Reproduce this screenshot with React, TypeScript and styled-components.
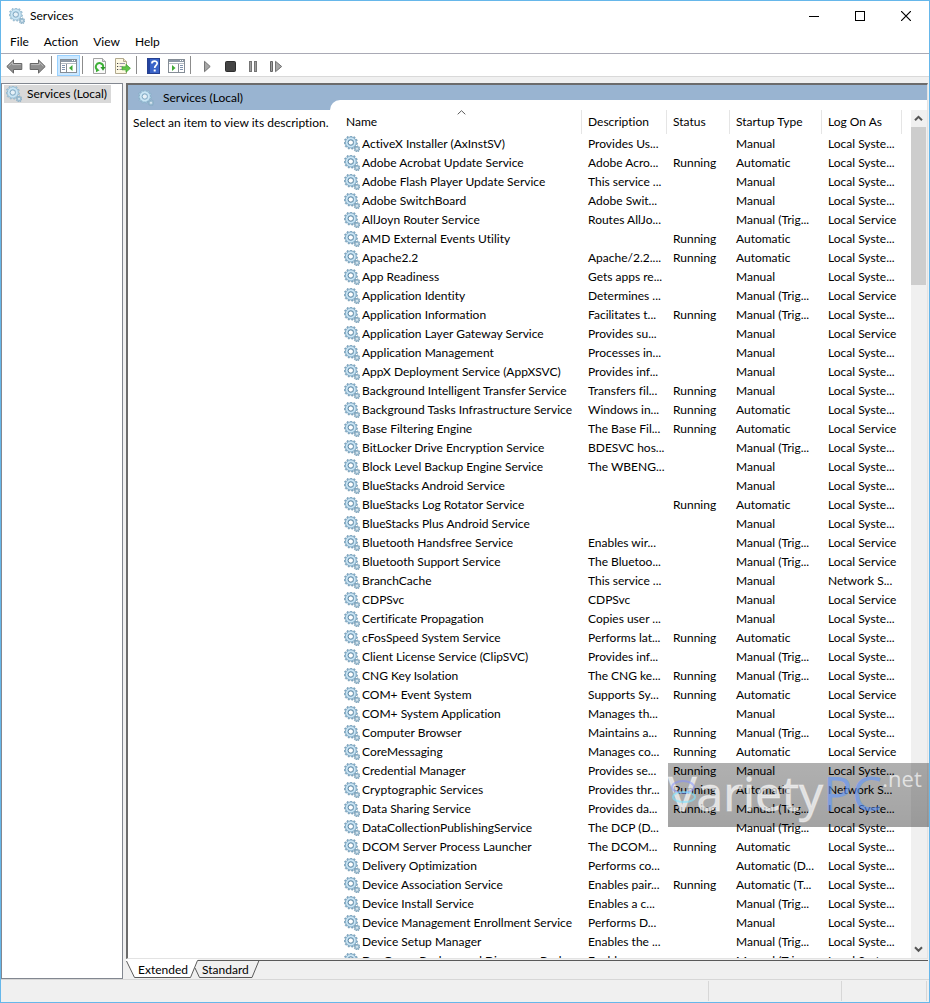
import React from 'react';
import styled, { createGlobalStyle } from 'styled-components';

const GlobalStyle = createGlobalStyle`
  *, *::before, *::after { box-sizing: border-box; }
  body { margin: 0; }
  body, button, table {
    font-family: Lato, 'Open Sans', sans-serif;
    font-size: 12px;
    line-height: 18px;
    color: #000;
    font-variant-ligatures: none;
  }
  button { margin: 0; padding: 0; border: 0; background: none; cursor: default; }
  svg { display: block; flex: none; }
`;

const AppWindow = styled.div`
  position: relative;
  display: flex;
  flex-direction: column;
  height: 100vh;
  border: 1px solid #66b7ea;
  background: #f0f0f0;
  overflow: hidden;
`;

const TitleBar = styled.header`
  display: flex;
  align-items: center;
  flex: none;
  height: 30px;
  padding-left: 8px;
  gap: 5px;
  background: #fff;
`;

const Title = styled.h1`
  flex: 1;
  margin: 0;
  font-size: 12px;
  font-weight: 400;
`;

const CaptionButton = styled.button`
  display: grid;
  place-items: center;
  width: 46px;
  height: 30px;
`;

const CaptionButtons = styled.div`
  display: flex;
`;

const MenuBar = styled.nav`
  display: flex;
  flex: none;
  height: 23px;
  padding-left: 2px;
  border-bottom: 1px solid #a9aab5;
  background: #fff;
`;

const MenuItem = styled.button`
  padding: 0 8px 0 7px;
`;

const ToolBar = styled.div`
  display: flex;
  flex: none;
  height: 23px;
  padding: 1px 2px 0;
  border-bottom: 1px solid #d9d9d9;
  background: #fff;
`;

const ToolButton = styled.button<{ $active?: boolean }>`
  display: grid;
  place-items: center;
  width: 23px;
  height: 21px;
  padding-top: 1px;
  border: 1px solid ${(p) => (p.$active ? '#99d1ff' : 'transparent')};
  background: ${(p) => (p.$active ? '#cce8ff' : 'transparent')};
`;

const ToolSeparator = styled.span`
  width: 1px;
  margin: 1px 5px 2px 2px;
  background: #8c8c8c;
`;

const Workspace = styled.div`
  display: flex;
  flex: 1;
  min-height: 0;
  padding-top: 6px;
`;

const Tree = styled.aside`
  flex: none;
  width: 122px;
  padding: 1px 2px;
  border: 1px solid #828790;
  background: #fff;
`;

const TreeItem = styled.button`
  display: flex;
  align-items: center;
  gap: 5px;
  height: 18px;
  padding: 0 4px 0 2px;
  background: #d9d9d9;
`;

const Content = styled.main`
  display: flex;
  flex-direction: column;
  flex: 1;
  min-width: 0;
  margin-left: 3px;
`;

const Sheet = styled.div`
  display: flex;
  flex: 1;
  min-height: 0;
  border-left: 2px solid #6c6c6c;
  border-top: 2px solid #6c6c6c;
  border-right: 1px solid #e3e3e3;
  border-bottom: 1px solid #e3e3e3;
  background: #99b4d1;
  margin-right: 1px;
`;

const DetailPane = styled.section`
  display: flex;
  flex-direction: column;
  flex: none;
  width: 202px;
`;

const DetailHeading = styled.h2`
  display: flex;
  align-items: center;
  flex: none;
  gap: 9px;
  height: 25px;
  margin: 0;
  padding-left: 10px;
  font-size: 12px;
  font-weight: 400;
`;

const DetailBody = styled.p`
  flex: 1;
  margin: 0;
  padding: 4px 0 0 5px;
  background: #fff;
  white-space: nowrap;
`;

const ListPane = styled.section`
  display: flex;
  flex: 1;
  min-width: 0;
  padding-top: 15px;
`;

const ListBody = styled.div`
  display: flex;
  flex: 1;
  min-width: 0;
  padding: 10px 0 0 10px;
  border-top-left-radius: 10px;
  background: #fff;
`;

const TableClip = styled.div`
  flex: 1;
  min-width: 0;
  overflow: hidden;
`;

const ServiceTable = styled.table`
  width: 562px;
  table-layout: fixed;
  border-collapse: separate;
  border-spacing: 0;
`;

const HeadCell = styled.th<{ $width: number }>`
  position: relative;
  width: ${(p) => p.$width}px;
  height: 24px;
  padding: 0 0 0 6px;
  border-right: 1px solid #e5e5e5;
  font-weight: 400;
  text-align: left;
`;

const SortMark = styled.svg`
  position: absolute;
  top: 0;
  left: 50%;
  margin-left: -4px;
`;

const Cell = styled.td`
  height: 19px;
  padding: 0 0 0 6px;
  line-height: 19px;
  white-space: nowrap;
`;

const NameCell = styled(Cell)`
  padding-left: 4px;
`;

const NameContent = styled.span`
  display: flex;
  align-items: center;
  gap: 2px;
`;

const ScrollBar = styled.div`
  display: flex;
  flex-direction: column;
  flex: none;
  width: 16px;
  padding-right: 1px;
  background: #f0f0f0;
`;

const ScrollButton = styled.button`
  display: grid;
  place-items: center;
  flex: none;
  height: 17px;
`;

const ScrollTrack = styled.div`
  flex: 1;
`;

const ScrollThumb = styled.div`
  height: 158px;
  background: #cdcdcd;
`;

const TabStrip = styled.div`
  position: relative;
  display: flex;
  flex: none;
  height: 20px;
  padding: 1px 0 0 8px;
`;

const TabShapes = styled.svg`
  position: absolute;
  inset: 0 auto auto 0;
`;

const TabLine = styled.span`
  flex: 1;
  margin-right: 1px;
  border-top: 1px solid #5a5a5a;
`;

const Tab = styled.button`
  position: relative;
  width: 64px;
  height: 19px;
  padding-left: 4px;
  text-align: left;
  line-height: 19px;
`;

const StatusBar = styled.footer`
  display: flex;
  justify-content: flex-end;
  flex: none;
  height: 23px;
  padding: 1px 2px 1px 0;
  border-top: 1px solid #d7d7d7;
`;

const StatusCell = styled.span<{ $width: number }>`
  width: ${(p) => p.$width}px;
  border-left: 1px solid #d7d7d7;

  &:last-child { border-right: 1px solid #d7d7d7; }
`;

const Watermark = styled.div`
  position: absolute;
  right: 0;
  bottom: 175px;
  display: flex;
  align-items: flex-start;
  width: 261px;
  height: 64px;
  background: linear-gradient(rgba(0, 0, 0, 0.31), rgba(0, 0, 0, 0.36));
  font-family: 'Open Sans', sans-serif;
  font-size: 48px;
  line-height: 60px;
  color: rgba(255, 255, 255, 0.66);
  pointer-events: none;
  overflow: hidden;
`;

const WatermarkWord = styled.span`
  -webkit-text-stroke: 1px rgba(255, 255, 255, 0.4);
`;

const WatermarkAccent = styled.span`
  color: rgba(95, 150, 255, 0.6);
`;

const WatermarkSuffix = styled.span`
  font-size: 22px;
  line-height: 30px;
`;

const Swirl = styled.svg`
  position: absolute;
  top: 16px;
  left: 1px;
`;

function teeth(cx: number, cy: number, outer: number, inner: number, count: number) {
  const points: string[] = [];
  for (let i = 0; i < count; i++) {
    const base = (i / count) * Math.PI * 2;
    const step = (Math.PI * 2) / count;
    [[0.0, inner], [0.15, outer], [0.5, outer], [0.65, inner]].forEach(([t, r]) => {
      const a = base + step * t;
      points.push(`${(cx + Math.cos(a) * r).toFixed(2)},${(cy + Math.sin(a) * r).toFixed(2)}`);
    });
  }
  return points.join(' ');
}

const BIG_GEAR = teeth(6.8, 6.5, 6.8, 5.4, 11);
const SMALL_GEAR = teeth(13, 12.8, 3.1, 2.2, 8);

function GearIcon({ soft = false }: { soft?: boolean }) {
  const edge = soft ? '#7fa6bf' : '#5f88a3';
  return (
    <svg width="16" height="16" viewBox="0 0 16 16" aria-hidden="true">
      <polygon points={BIG_GEAR} fill={soft ? '#a9cde2' : '#8db4cf'} stroke={edge} strokeWidth="0.5" />
      <circle cx="6.8" cy="6.5" r="4.1" fill="none" stroke="#cbe6f5" strokeWidth="1.6" />
      <circle cx="6.8" cy="6.5" r="2.6" fill={soft ? '#e6f1f8' : '#fff'} stroke={edge} strokeWidth="0.9" />
      <polygon points={SMALL_GEAR} fill="#9fbfd3" stroke={edge} strokeWidth="0.5" />
      <circle cx="13" cy="12.8" r="0.9" fill="#eef6fa" />
    </svg>
  );
}

function ArrowIcon({ forward = false }: { forward?: boolean }) {
  const flip = forward ? 'translate(17 0) scale(-1 1)' : undefined;
  return (
    <svg width="17" height="15" viewBox="0 0 17 15" aria-hidden="true">
      <g transform={flip}>
        <path d="M.8 7.500 7.500.9V4.500H15.800V10.500H7.500V14.100Z" fill="#8e8e8e" stroke="#666" />
        <path d="M2.600 7.200 6.600 3.300V5.600H14.800" fill="none" stroke="#bdbdbd" />
      </g>
    </svg>
  );
}

function ConsoleIcon({ mirrored = false }: { mirrored?: boolean }) {
  return (
    <svg width="17" height="14" viewBox="0 0 17 14" shapeRendering="crispEdges" aria-hidden="true">
      <rect x="0.5" y="0.5" width="16" height="13" fill="#fff" stroke="#858d96" />
      <rect x="1" y="1" width="15" height="2" fill="#8b98a6" />
      <path d="M1 4.500h15" stroke="#b4bcc4" />
      <path d="M12 1h1v1h-1zM14 1h1v1h-1z" fill="#fff" />
      {mirrored ? (
        <>
          <path d="M10.500 5v8" stroke="#858d96" />
          <path d="M12 6.500h3M12 8.500h3M12 10.500h3" stroke="#7f93ae" />
          <path d="M4 6v6L7.500 9z" fill="#3faa36" shapeRendering="auto" />
        </>
      ) : (
        <>
          <path d="M6.500 5v8" stroke="#858d96" />
          <path d="M2 6.500h3M2 8.500h3M2 10.500h3" stroke="#7f93ae" />
          <path d="M12.500 6v6L9 9z" fill="#3faa36" shapeRendering="auto" />
        </>
      )}
    </svg>
  );
}

function RefreshIcon() {
  return (
    <svg width="15" height="17" viewBox="0 0 15 17" aria-hidden="true">
      <path d="M1.500.500h9l3 3v12h-12z" fill="#fafafa" stroke="#a3a3a3" />
      <path d="M10.500.500v3h3" fill="#ddd" stroke="#a3a3a3" />
      <path d="M5.600 12A3.700 3.700 0 1 1 11.200 9.200" fill="none" stroke="#3db036" strokeWidth="1.9" />
      <path d="M8.400 9h5.200l-2.600 3.800z" fill="#2f9c2b" />
      <path d="M4 9.700l3.600 2.600L4 14.200z" fill="#3db036" />
    </svg>
  );
}

function ExportIcon() {
  return (
    <svg width="17" height="17" viewBox="0 0 17 17" aria-hidden="true">
      <path d="M1.500.500h8l3 3v12h-11z" fill="#fdf8e2" stroke="#b1a98e" />
      <path d="M9.500.500v3h3" fill="#eee4c0" stroke="#b1a98e" />
      <path d="M3 5.500h1.200M3 8.500h1.200M3 11.500h1.200" stroke="#444" />
      <path d="M5.500 5.500H11M5.500 8.500h3M5.500 11.500h3" stroke="#9a94a8" />
      <path d="M8 8.800h4V6.300l4.400 4-4.400 4v-2.500H8z" fill="#62c649" stroke="#3a9f2d" strokeWidth="0.7" />
    </svg>
  );
}

function HelpIcon() {
  return (
    <svg width="13" height="17" viewBox="0 0 13 17" aria-hidden="true">
      <rect x="0.5" y="0.5" width="12" height="15" fill="#3a63c8" stroke="#26408f" />
      <rect x="1" y="1" width="2" height="14" fill="#2343a0" />
      <path d="M4.900 5.400C4.900 2.300 10.200 2.300 10.200 5.300 10.200 7.400 7.700 7.500 7.700 10" fill="none" stroke="#fff" strokeWidth="1.7" />
      <rect x="6.700" y="11.500" width="2" height="2" fill="#fff" />
    </svg>
  );
}

function PlayIcon() {
  return (
    <svg width="7" height="13" viewBox="0 0 7 13" aria-hidden="true">
      <path d="M.5 1.300v10.400L6.200 6.500z" fill="#a7a7a7" stroke="#757575" />
    </svg>
  );
}

function StopIcon() {
  return (
    <svg width="11" height="11" viewBox="0 0 11 11" aria-hidden="true">
      <rect x="0.5" y="0.5" width="10" height="10" rx="1" fill="#444" stroke="#2d2d2d" />
    </svg>
  );
}

function PauseIcon() {
  return (
    <svg width="9" height="11" viewBox="0 0 9 11" shapeRendering="crispEdges" aria-hidden="true">
      <path d="M0.500 0.500h2v10h-2zM5.500 0.500h2v10h-2z" fill="#a0a0a0" stroke="#757575" />
    </svg>
  );
}

function StepIcon() {
  return (
    <svg width="13" height="13" viewBox="0 0 13 13" aria-hidden="true">
      <path d="M0.500 1.500h2v10h-2z" fill="#a0a0a0" stroke="#656565" />
      <path d="M5.500 1.300v10.400L11.700 6.500z" fill="#a7a7a7" stroke="#757575" />
    </svg>
  );
}

function ScrollArrow({ down = false }: { down?: boolean }) {
  return (
    <svg width="9" height="7" viewBox="0 0 9 7" aria-hidden="true">
      <path d={down ? 'M1 1.3 4.5 4.8 8 1.3' : 'M1 5.3 4.5 1.8 8 5.3'} fill="none" stroke="#555" strokeWidth="2" />
    </svg>
  );
}

const MAN = 'Manual';
const TRIG = 'Manual (Trig...';
const AUTO = 'Automatic';
const SYS = 'Local Syste...';
const SVC = 'Local Service';
const NET = 'Network S...';

type Service = [name: string, description: string, running: 0 | 1, startup: string, account: string];

const services: Service[] = [
  ['ActiveX Installer (AxInstSV)', 'Provides Us...', 0, MAN, SYS],
  ['Adobe Acrobat Update Service', 'Adobe Acro...', 1, AUTO, SYS],
  ['Adobe Flash Player Update Service', 'This service ...', 0, MAN, SYS],
  ['Adobe SwitchBoard', 'Adobe Swit...', 0, MAN, SYS],
  ['AllJoyn Router Service', 'Routes AllJo...', 0, TRIG, SVC],
  ['AMD External Events Utility', '', 1, AUTO, SYS],
  ['Apache2.2', 'Apache/2.2....', 1, AUTO, SYS],
  ['App Readiness', 'Gets apps re...', 0, MAN, SYS],
  ['Application Identity', 'Determines ...', 0, TRIG, SVC],
  ['Application Information', 'Facilitates t...', 1, TRIG, SYS],
  ['Application Layer Gateway Service', 'Provides su...', 0, MAN, SVC],
  ['Application Management', 'Processes in...', 0, MAN, SYS],
  ['AppX Deployment Service (AppXSVC)', 'Provides inf...', 0, MAN, SYS],
  ['Background Intelligent Transfer Service', 'Transfers fil...', 1, MAN, SYS],
  ['Background Tasks Infrastructure Service', 'Windows in...', 1, AUTO, SYS],
  ['Base Filtering Engine', 'The Base Fil...', 1, AUTO, SVC],
  ['BitLocker Drive Encryption Service', 'BDESVC hos...', 0, TRIG, SYS],
  ['Block Level Backup Engine Service', 'The WBENG...', 0, MAN, SYS],
  ['BlueStacks Android Service', '', 0, MAN, SYS],
  ['BlueStacks Log Rotator Service', '', 1, AUTO, SYS],
  ['BlueStacks Plus Android Service', '', 0, MAN, SYS],
  ['Bluetooth Handsfree Service', 'Enables wir...', 0, TRIG, SVC],
  ['Bluetooth Support Service', 'The Bluetoo...', 0, TRIG, SVC],
  ['BranchCache', 'This service ...', 0, MAN, NET],
  ['CDPSvc', 'CDPSvc', 0, MAN, SVC],
  ['Certificate Propagation', 'Copies user ...', 0, MAN, SYS],
  ['cFosSpeed System Service', 'Performs lat...', 1, AUTO, SYS],
  ['Client License Service (ClipSVC)', 'Provides inf...', 0, TRIG, SYS],
  ['CNG Key Isolation', 'The CNG ke...', 1, TRIG, SYS],
  ['COM+ Event System', 'Supports Sy...', 1, AUTO, SVC],
  ['COM+ System Application', 'Manages th...', 0, MAN, SYS],
  ['Computer Browser', 'Maintains a...', 1, TRIG, SYS],
  ['CoreMessaging', 'Manages co...', 1, AUTO, SVC],
  ['Credential Manager', 'Provides se...', 1, MAN, SYS],
  ['Cryptographic Services', 'Provides thr...', 1, AUTO, NET],
  ['Data Sharing Service', 'Provides da...', 1, TRIG, SYS],
  ['DataCollectionPublishingService', 'The DCP (D...', 0, TRIG, SYS],
  ['DCOM Server Process Launcher', 'The DCOM...', 1, AUTO, SYS],
  ['Delivery Optimization', 'Performs co...', 0, 'Automatic (D...', SYS],
  ['Device Association Service', 'Enables pair...', 1, 'Automatic (T...', SYS],
  ['Device Install Service', 'Enables a c...', 0, TRIG, SYS],
  ['Device Management Enrollment Service', 'Performs D...', 0, MAN, SYS],
  ['Device Setup Manager', 'Enables the ...', 0, TRIG, SYS],
  ['DevQuery Background Discovery Broker', 'Enables ap...', 0, TRIG, SYS],
];

export default function App() {
  return (
    <>
      <GlobalStyle />
      <AppWindow>
        <TitleBar>
          <GearIcon soft />
          <Title>Services</Title>
          <CaptionButtons>
            <CaptionButton aria-label="Minimize">
              <svg width="10" height="11" shapeRendering="crispEdges"><path d="M0 5.5h10" stroke="#000" /></svg>
            </CaptionButton>
            <CaptionButton aria-label="Maximize">
              <svg width="10" height="10" shapeRendering="crispEdges"><path d="M.5.5h9v9h-9z" fill="none" stroke="#000" /></svg>
            </CaptionButton>
            <CaptionButton aria-label="Close">
              <svg width="10" height="10"><path d="M0 0 10 10M10 0 0 10" stroke="#000" strokeWidth="1.2" /></svg>
            </CaptionButton>
          </CaptionButtons>
        </TitleBar>

        <MenuBar>
          {['File', 'Action', 'View', 'Help'].map((label) => (
            <MenuItem key={label}>{label}</MenuItem>
          ))}
        </MenuBar>

        <ToolBar role="toolbar">
          <ToolButton aria-label="Back"><ArrowIcon /></ToolButton>
          <ToolButton aria-label="Forward"><ArrowIcon forward /></ToolButton>
          <ToolSeparator />
          <ToolButton $active aria-label="Show or hide console tree"><ConsoleIcon /></ToolButton>
          <ToolSeparator />
          <ToolButton aria-label="Refresh"><RefreshIcon /></ToolButton>
          <ToolButton aria-label="Export list"><ExportIcon /></ToolButton>
          <ToolSeparator />
          <ToolButton aria-label="Help"><HelpIcon /></ToolButton>
          <ToolButton aria-label="Show or hide action pane"><ConsoleIcon mirrored /></ToolButton>
          <ToolSeparator />
          <ToolButton aria-label="Start service"><PlayIcon /></ToolButton>
          <ToolButton aria-label="Stop service"><StopIcon /></ToolButton>
          <ToolButton aria-label="Pause service"><PauseIcon /></ToolButton>
          <ToolButton aria-label="Restart service"><StepIcon /></ToolButton>
        </ToolBar>

        <Workspace>
          <Tree>
            <TreeItem><GearIcon soft />Services (Local)</TreeItem>
          </Tree>

          <Content>
            <Sheet>
              <DetailPane>
                <DetailHeading><GearIcon soft />Services (Local)</DetailHeading>
                <DetailBody>Select an item to view its description.</DetailBody>
              </DetailPane>
              <ListPane>
                <ListBody>
                  <TableClip>
                    <ServiceTable>
                      <thead>
                        <tr>
                          <HeadCell $width={242}>
                            Name
                            <SortMark width="9" height="5" viewBox="0 0 9 5" aria-hidden="true">
                              <path d="M.7 4.3 4.5.7 8.3 4.3" fill="none" stroke="#5a5a5a" />
                            </SortMark>
                          </HeadCell>
                          <HeadCell $width={85}>Description</HeadCell>
                          <HeadCell $width={63}>Status</HeadCell>
                          <HeadCell $width={92}>Startup Type</HeadCell>
                          <HeadCell $width={80}>Log On As</HeadCell>
                        </tr>
                      </thead>
                      <tbody>
                        {services.map(([name, description, running, startup, account]) => (
                          <tr key={name}>
                            <NameCell><NameContent><GearIcon />{name}</NameContent></NameCell>
                            <Cell>{description}</Cell>
                            <Cell>{running ? 'Running' : ''}</Cell>
                            <Cell>{startup}</Cell>
                            <Cell>{account}</Cell>
                          </tr>
                        ))}
                      </tbody>
                    </ServiceTable>
                  </TableClip>
                  <ScrollBar>
                    <ScrollButton aria-label="Scroll up"><ScrollArrow /></ScrollButton>
                    <ScrollTrack><ScrollThumb /></ScrollTrack>
                    <ScrollButton aria-label="Scroll down"><ScrollArrow down /></ScrollButton>
                  </ScrollBar>
                </ListBody>
              </ListPane>
            </Sheet>
            <TabStrip>
              <TabShapes width="138" height="20" viewBox="0 0 138 20" aria-hidden="true">
                <path d="M0 0H72V2L64.500 19H8.500L0 2Z" fill="#fff" />
                <path d="M.5 2 8.500 18.500H64.500L71.500 1.500H138M133 1.500L126 18.500H73.500L69 9" fill="none" stroke="#5a5a5a" />
              </TabShapes>
              <Tab>Extended</Tab>
              <Tab>Standard</Tab>
              <TabLine />
            </TabStrip>
          </Content>
        </Workspace>

        <StatusBar>
          <StatusCell $width={133} />
          <StatusCell $width={86} />
        </StatusBar>

        <Watermark>
          <Swirl width="30" height="26" viewBox="0 0 30 26" aria-hidden="true">
            <ellipse cx="14" cy="8" rx="11" ry="6" fill="none" stroke="#7d8cff" strokeOpacity="0.5" strokeWidth="2" />
            <ellipse cx="15" cy="18" rx="11" ry="5" fill="none" stroke="#7fe4ff" strokeOpacity="0.6" strokeWidth="2" />
          </Swirl>
          <WatermarkWord>Variety</WatermarkWord>
          <WatermarkAccent>PC</WatermarkAccent>
          <WatermarkSuffix>.net</WatermarkSuffix>
        </Watermark>
      </AppWindow>
    </>
  );
}
